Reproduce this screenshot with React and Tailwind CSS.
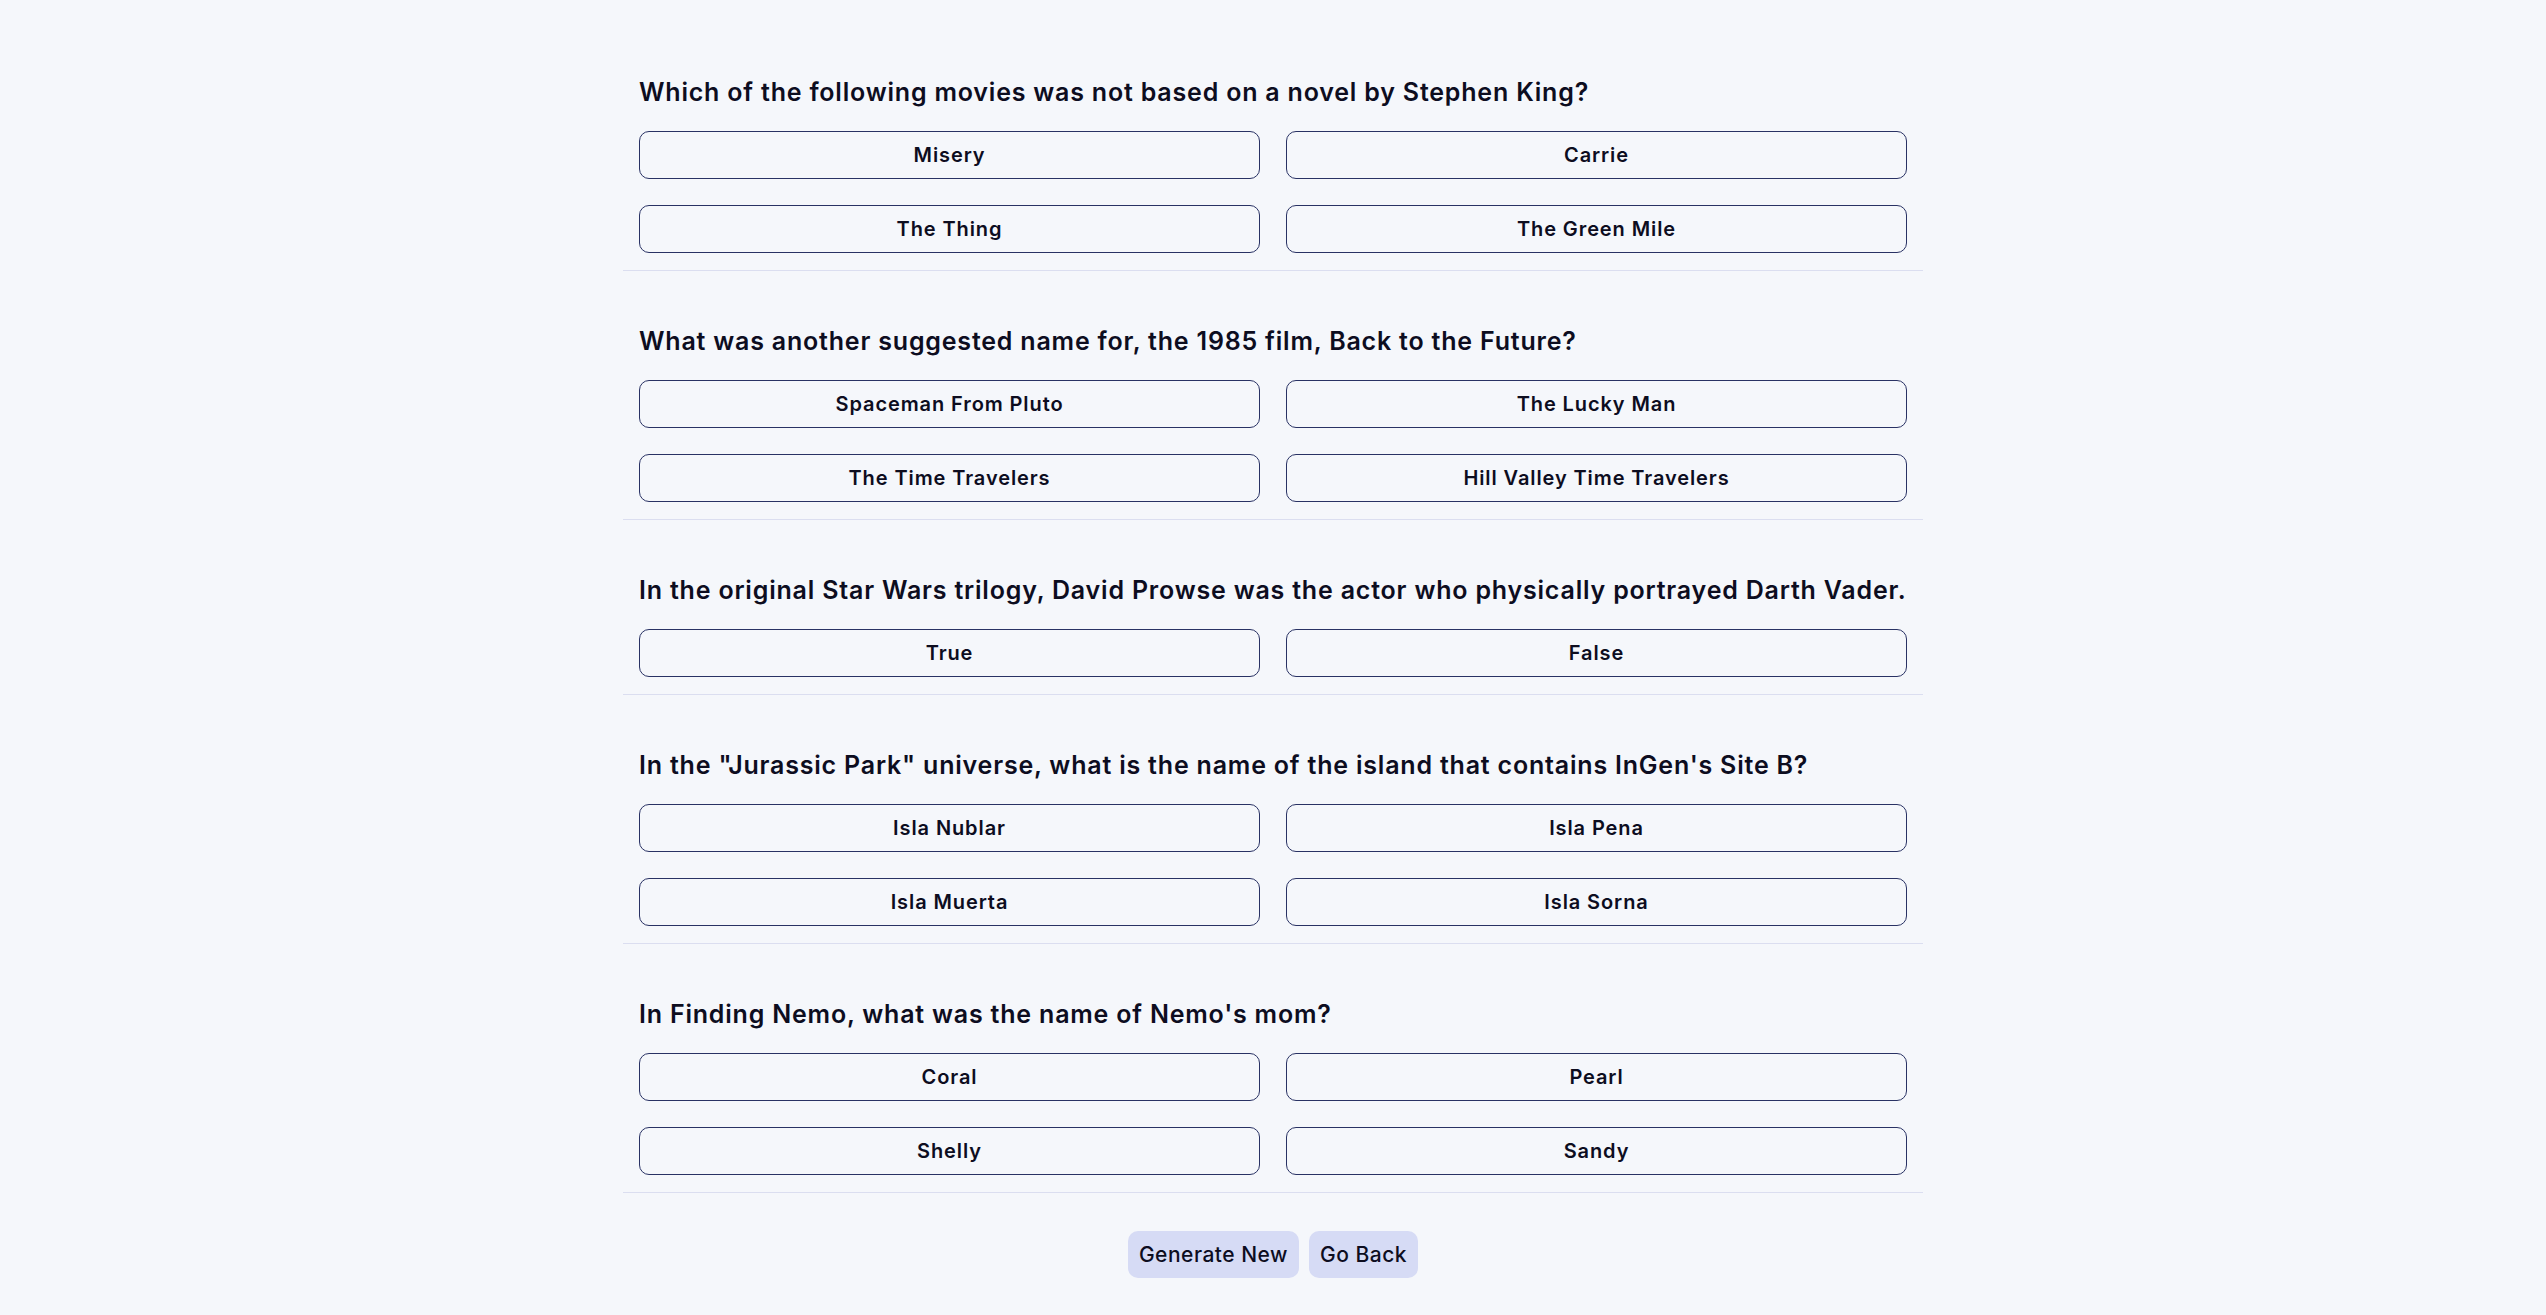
import React from 'react';

const questions = [
  {
    q: 'Which of the following movies was not based on a novel by Stephen King?',
    answers: ['Misery', 'Carrie', 'The Thing', 'The Green Mile'],
  },
  {
    q: 'What was another suggested name for, the 1985 film, Back to the Future?',
    answers: ['Spaceman From Pluto', 'The Lucky Man', 'The Time Travelers', 'Hill Valley Time Travelers'],
  },
  {
    q: 'In the original Star Wars trilogy, David Prowse was the actor who physically portrayed Darth Vader.',
    answers: ['True', 'False'],
  },
  {
    q: 'In the "Jurassic Park" universe, what is the name of the island that contains InGen\'s Site B?',
    answers: ['Isla Nublar', 'Isla Pena', 'Isla Muerta', 'Isla Sorna'],
  },
  {
    q: "In Finding Nemo, what was the name of Nemo's mom?",
    answers: ['Coral', 'Pearl', 'Shelly', 'Sandy'],
  },
];

const App = () => {
  return (
    <div className="min-h-screen bg-[#f5f7fb] text-[#0d0d1f] font-['Inter',sans-serif]">
      <div className="w-[1300px] mx-auto pt-[22px] pb-[37px]">
        {questions.map((item, i) => (
          <div key={i} className="px-4 pt-[53px] pb-[17px] border-b border-[#dbdef0]">
            <h2 className="text-[25px] leading-[34px] font-semibold tracking-[0.8px] whitespace-nowrap mb-[22px]">
              {item.q}
            </h2>
            <div className="grid grid-cols-2 gap-x-[26px] gap-y-[26px]">
              {item.answers.map((a) => (
                <button
                  key={a}
                  className="h-[48px] rounded-[10px] border border-[#293264] text-[20px] font-semibold tracking-[0.9px]"
                >
                  {a}
                </button>
              ))}
            </div>
          </div>
        ))}

        <div className="flex justify-center gap-[10px] mt-[38px]">
          <button className="h-[47px] px-[11px] rounded-[10px] bg-[#d6dbf5] text-[21px] font-medium tracking-[0.5px]">
            Generate New
          </button>
          <button className="h-[47px] px-[11px] rounded-[10px] bg-[#d6dbf5] text-[21px] font-medium tracking-[0.5px]">
            Go Back
          </button>
        </div>
      </div>
    </div>
  );
};

export default App;
